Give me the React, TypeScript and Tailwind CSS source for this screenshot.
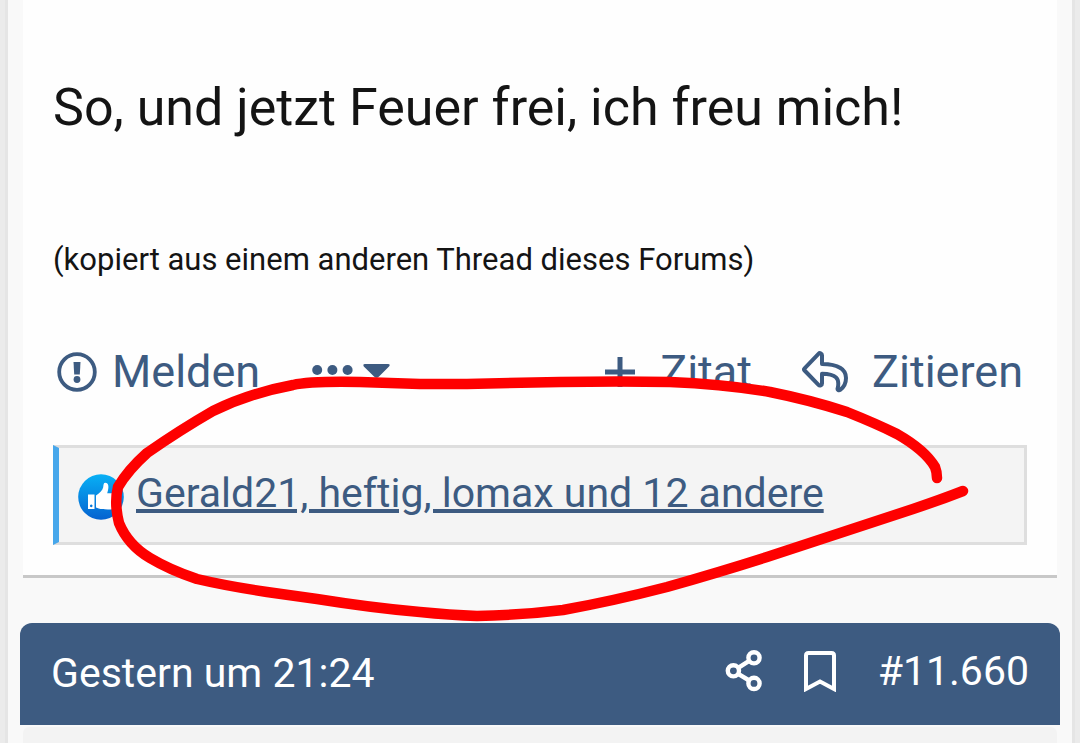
import type { ReactNode } from "react";

interface ActionProps {
  icon: ReactNode;
  label: string;
  className: string;
}

export default function App() {
  return (
    <div className="min-h-screen bg-[#ebebeb] px-[5px] font-[Roboto,sans-serif] text-[#141414]">
      <div className="relative min-h-screen border-x-[3px] border-[#e5e5e5] bg-[#f9f9f9]">
        <Post />
        <PostHeader />
        <div className="mx-[15px] mt-0.5 h-4 rounded-t-md bg-[#f3f3f3]" />
        <PenMark />
      </div>
    </div>
  );
}

function Post() {
  return (
    <article className="mx-[15px] border-b-[3px] border-[#c8c8c8] bg-[#fefefe] px-[30px] pt-[78px] pb-[30px]">
      <p className="text-[52px] leading-[60px]">So, und jetzt Feuer frei, ich freu mich!</p>
      <p className="mt-[102px] text-[31px] leading-10">(kopiert aus einem anderen Thread dieses Forums)</p>

      <div className="mt-[67px] flex items-center justify-between pr-1 pl-1 text-[45px] leading-[50px] text-[#3d5b81]">
        <div className="flex items-center gap-[52px]">
          <Action icon={<AlertIcon />} label="Melden" className="gap-[15px]" />
          <button type="button" aria-label="Mehr" className="flex">
            <MoreIcon />
          </button>
        </div>
        <div className="flex items-center gap-[50px]">
          <Action icon={<PlusIcon />} label="Zitat" className="gap-6" />
          <Action icon={<ReplyIcon />} label="Zitieren" className="gap-6" />
        </div>
      </div>

      <div className="mt-12 flex items-center gap-3 border-[3px] border-l-[6px] border-[#dedede] border-l-[#47a7eb] bg-[#f4f4f4] pt-[18px] pr-5 pb-[22px] pl-[19px]">
        <LikeIcon />
        <a href="#reactions" className="text-[41px] leading-[50px] text-[#3d5b81] underline decoration-[4px]">
          Gerald21, heftig, lomax und 12 andere
        </a>
      </div>
    </article>
  );
}

function PostHeader() {
  return (
    <header className="mx-3 mt-[45px] flex items-start justify-between rounded-t-xl bg-[#3d5b81] px-[31px] pt-[23px] pb-[27px] text-[41px] leading-[50px] text-white">
      <a href="#post" className="pt-0.5">Gestern um 21:24</a>
      <div className="flex items-center gap-[42px]">
        <button type="button" aria-label="Teilen">
          <ShareIcon />
        </button>
        <button type="button" aria-label="Lesezeichen">
          <BookmarkIcon />
        </button>
        <a href="#post-11660">#11.660</a>
      </div>
    </header>
  );
}

function Action({ icon, label, className }: ActionProps) {
  return (
    <button type="button" className={`flex items-center ${className}`}>
      {icon}
      <span>{label}</span>
    </button>
  );
}

// ──────────────────────────────────────────────────────────
// Icons
// ──────────────────────────────────────────────────────────

function AlertIcon() {
  return (
    <svg width="40" height="40" viewBox="0 0 40 40" fill="none">
      <circle cx="20" cy="20" r="17.8" stroke="currentColor" strokeWidth="3.8" />
      <path d="M16.5 10h7l-.7 12.600h-5.600z" fill="currentColor" />
      <circle cx="20" cy="27.5" r="3.4" fill="currentColor" />
    </svg>
  );
}

function MoreIcon() {
  return (
    <svg width="78" height="40" viewBox="0 0 78 40" fill="currentColor">
      <circle cx="5.2" cy="18" r="5" />
      <circle cx="20.4" cy="18" r="5" />
      <circle cx="35.6" cy="18" r="5" />
      <path d="M53 12h23q2.800 0 1 2.500L67 24.500q-2.500 2.500-5 0L51.800 14.500Q50.500 12 53 12z" />
    </svg>
  );
}

function PlusIcon() {
  return (
    <svg width="32" height="40" viewBox="0 0 32 40" fill="none">
      <path d="M1 20h30M16 5v30" stroke="currentColor" strokeWidth="5" />
    </svg>
  );
}

function ReplyIcon() {
  return (
    <svg width="46" height="42" viewBox="0 0 46 42" fill="none">
      <path
        d="M2.600 17.300 16.500 2.800c1.200-1.300 3.500-.6 3.500 1.500v8.800c14 .2 24 3.500 24 14 0 5-2.200 9.200-5.800 11.800-1.400 1-3.100-.1-2.500-1.800C38 27.500 34 23 20 22.800v9.600c0 2.100-2.300 2.800-3.500 1.500L2.600 19.500c-.7-.7-.7-1.500 0-2.200z"
        stroke="currentColor"
        strokeWidth="4"
        strokeLinejoin="round"
      />
    </svg>
  );
}

function LikeIcon() {
  return (
    <svg width="46" height="46" viewBox="0 0 46 46" className="mt-2 shrink-0">
      <defs>
        <linearGradient id="like-fill" x1="0" y1="0" x2="0" y2="1">
          <stop offset="0" stopColor="#08b0f5" />
          <stop offset="1" stopColor="#0562d0" />
        </linearGradient>
      </defs>
      <circle cx="23" cy="23" r="22.8" fill="url(#like-fill)" />
      <path
        fillRule="evenodd"
        d="M10 20.500h6.500V35H10zM13.200 30.600a1.300 1.300 0 1 0 .1 0z"
        fill="#fff"
      />
      <path
        d="M18 21.500c4-2.500 6.500-5 7.200-8.200.4-3 .4-4.500 2-4.500 3.700 0 4 4.200 2 10.500h6.900c3.300 0 3.900 3.700 1.700 5 1.300 1.500.9 3.500-.7 4.300.8 1.500.2 3.300-1.400 3.800.5 2-.7 3-3 3-6.500 0-10.500.2-14.700-2z"
        fill="#fff"
      />
    </svg>
  );
}

function ShareIcon() {
  return (
    <svg width="38" height="42" viewBox="0 0 38 42" fill="none" stroke="currentColor" strokeWidth="4.4">
      <circle cx="30" cy="7.8" r="5.6" />
      <circle cx="9.4" cy="20.8" r="5.6" />
      <circle cx="30" cy="33.4" r="5.6" />
      <path d="M14.200 17.800 25.200 10.800M14.200 23.800 25.200 30.500" />
    </svg>
  );
}

function BookmarkIcon() {
  return (
    <svg width="32" height="42" viewBox="0 0 32 42" fill="none" stroke="currentColor" strokeWidth="4">
      <path d="M2 39V5.500Q2 3 4.500 3h23Q30 3 30 5.500V39L16 31.500z" />
    </svg>
  );
}

// Freehand loop drawn over the reactions row
function PenMark() {
  return (
    <svg
      className="pointer-events-none absolute top-0 left-0 w-full"
      viewBox="8 0 1064 743"
      fill="none"
      stroke="#fe0000"
      strokeWidth="10.5"
      strokeLinecap="round"
      strokeLinejoin="round"
    >
      <path d="M937 478 Q937 472 935 467 Q925 450 897 434 Q877 424 847 412 Q810 400 770 392 Q723 384 670 382 Q620 381 560 382 L467 384 L420 384 L360 382 Q310 381 293 385 Q250 393 213 411 Q180 430 147 453 Q128 470 118 487 Q114 503 119 523 Q128 545 150 558 Q170 570 197 579 Q227 586 267 592 L317 599 Q373 608 420 612 Q450 615 477 616 Q523 615 563 610 Q613 601 667 587 Q720 572 767 557 Q840 533 913 509 Q940 500 963 491" />
    </svg>
  );
}
